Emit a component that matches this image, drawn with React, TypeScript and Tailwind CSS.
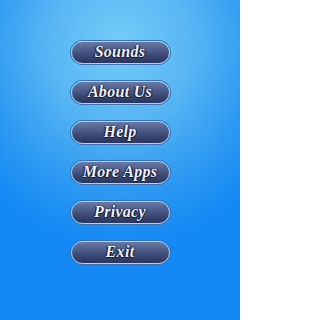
import React from "react";

const items = ["Sounds", "About Us", "Help", "More Apps", "Privacy", "Exit"];

export default function App() {
  return (
    <div className="w-[240px] h-[320px] overflow-hidden bg-[radial-gradient(ellipse_185px_200px_at_120px_45px,#74ccf8_0%,#58b6f4_38%,#2e9af2_72%,#1488f4_100%)] flex flex-col items-center pt-[41px] gap-[17px]">
      {items.map((t) => (
        <div
          key={t}
          className="w-[99px] h-[23px] rounded-full border border-[#a4d6f6] bg-[linear-gradient(to_bottom,#6a79a3_0%,#4c5c88_40%,#34426c_75%,#2a3660_100%)] shadow-[0_0_0_1px_#3a72b4] flex items-center justify-center pb-[2px]"
        >
          <span
            className="text-[16px] font-bold italic tracking-[0.3px] text-[#eef1f7] leading-none [text-shadow:0_1px_1px_#141a33,1px_0_1px_#141a33,-1px_0_1px_#141a33]"
            style={{ fontFamily: '"Liberation Serif", serif' }}
          >
            {t}
          </span>
        </div>
      ))}
    </div>
  );
}
